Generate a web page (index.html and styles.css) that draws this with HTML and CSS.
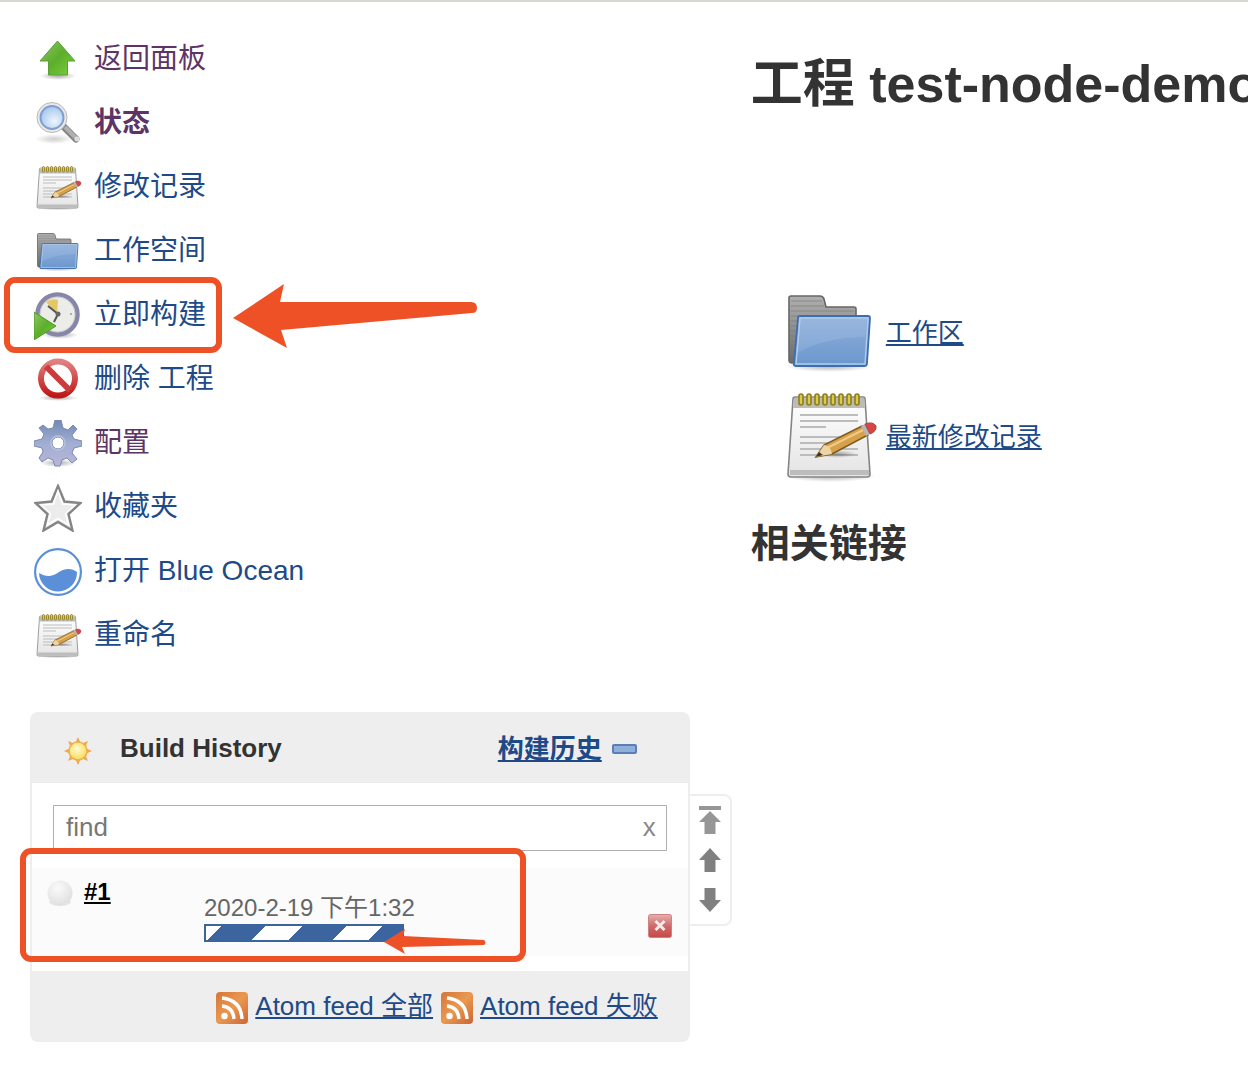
FILE: index.html
```html
<!DOCTYPE html>
<html lang="zh-CN">
<head>
<meta charset="utf-8">
<title>test-node-demo [Jenkins]</title>
<meta name="viewport" content="width=device-width, initial-scale=1">
<link rel="stylesheet" href="styles.css">
</head>
<body>
<svg class="defs" aria-hidden="true">
  <defs>
    <linearGradient id="g-green" x1="0" y1="0" x2="1" y2="1"><stop offset="0" stop-color="#8fc765"/><stop offset=".5" stop-color="#5cae2c"/><stop offset="1" stop-color="#7cd03a"/></linearGradient>
    <linearGradient id="g-grey" x1="0" y1="0" x2="0" y2="1"><stop offset="0" stop-color="#b0b0b0"/><stop offset="1" stop-color="#6b6b6b"/></linearGradient>
    <linearGradient id="g-blue" x1="0" y1="0" x2="0" y2="1"><stop offset="0" stop-color="#8fb0dc"/><stop offset="1" stop-color="#6c97cd"/></linearGradient>
    <linearGradient id="g-paper" x1="0" y1="0" x2="0" y2="1"><stop offset="0" stop-color="#ffffff"/><stop offset="1" stop-color="#e4e4e4"/></linearGradient>
    <linearGradient id="g-red" x1="0" y1="0" x2="0" y2="1"><stop offset="0" stop-color="#e08080"/><stop offset="1" stop-color="#c01818"/></linearGradient>
    <linearGradient id="g-gear" x1="0" y1="0" x2="0" y2="1"><stop offset="0" stop-color="#7088b4"/><stop offset=".5" stop-color="#a0aed2"/><stop offset="1" stop-color="#b9b6d8"/></linearGradient>
    <linearGradient id="g-feed" x1="0" y1="0" x2="1" y2="1"><stop offset="0" stop-color="#d6753c"/><stop offset=".5" stop-color="#e9994f"/><stop offset="1" stop-color="#cd6434"/></linearGradient>
    <linearGradient id="g-stop" x1="0" y1="0" x2="0" y2="1"><stop offset="0" stop-color="#e6b0b0"/><stop offset=".5" stop-color="#cf6a6a"/><stop offset="1" stop-color="#c64848"/></linearGradient>
    <radialGradient id="g-lens" cx=".6" cy=".65" r=".6"><stop offset="0" stop-color="#eef5fd"/><stop offset="1" stop-color="#abcaee"/></radialGradient>
    <radialGradient id="g-ball" cx=".4" cy=".3" r=".75"><stop offset="0" stop-color="#fafafa"/><stop offset="1" stop-color="#dedede"/></radialGradient>
    <radialGradient id="g-sun" cx=".45" cy=".4" r=".6"><stop offset="0" stop-color="#fffbd0"/><stop offset="1" stop-color="#f8dc5c"/></radialGradient>
    <radialGradient id="g-shadow"><stop offset="0" stop-color="#000" stop-opacity=".32"/><stop offset="1" stop-color="#000" stop-opacity="0"/></radialGradient>
  </defs>
  <symbol id="i-notepad" viewBox="0 0 96 96">
    <ellipse cx="48" cy="87" rx="46" ry="6" fill="url(#g-shadow)"/>
    <path d="M13 8H81Q83 8 83 10L88 85Q88 88 85 88H9Q6 88 6 85L11 10Q11 8 13 8Z" fill="url(#g-paper)" stroke="#858585" stroke-width="1.6"/>
    <path d="M12 9H82L83 19H11Z" fill="#bcbcb6"/>
    <path d="M8 81H87V86H8Z" fill="#bdbdbd"/>
    <path d="M18 26H76M18 32H76M18 38H44M18 48H60M18 54H50M18 60H76M18 66H76" stroke="#bcbcbc" stroke-width="2"/>
    <g fill="#dcc94c" stroke="#8f7d16" stroke-width="1.6"><rect x="17" y="5" width="4" height="11" rx="2"/><rect x="25" y="5" width="4" height="11" rx="2"/><rect x="33" y="5" width="4" height="11" rx="2"/><rect x="41" y="5" width="4" height="11" rx="2"/><rect x="49" y="5" width="4" height="11" rx="2"/><rect x="57" y="5" width="4" height="11" rx="2"/><rect x="65" y="5" width="4" height="11" rx="2"/><rect x="73" y="5" width="4" height="11" rx="2"/></g>
    <ellipse cx="55" cy="65" rx="20" ry="4" fill="url(#g-shadow)"/>
    <path d="M34 68L42 56L80 37L86 46L50 65Z" fill="#d7a04b" stroke="#7d5a1e" stroke-width="1.5"/>
    <path d="M45 59L81 41" stroke="#f0cb87" stroke-width="2"/>
    <path d="M34 68L42 56Q49 57 50 65Z" fill="#ecd4a4"/>
    <path d="M34 68L37 63L41 66Z" fill="#3d3320"/>
    <path d="M79 37L83 35L88 45L84 47Z" fill="#b9b4b4"/>
    <path d="M83 35Q91 32 94 37Q95 42 88 45Z" fill="#dc4444" stroke="#9a4a3c"/>
  </symbol>
  <symbol id="i-folder" viewBox="0 0 96 96">
    <ellipse cx="47" cy="81" rx="44" ry="6" fill="url(#g-shadow)"/>
    <path d="M9 11H38Q41 11 42 14L44 22H72Q74 22 74 24V78H10Q7 78 7 75V13Q7 11 9 11Z" fill="url(#g-grey)" stroke="#666" stroke-width="1.6"/>
    <path d="M9 16H40M9 21H42M9 26H72M9 31H16M9 36H16M9 41H15M9 46H15M9 51H14M9 56H14M9 61H13M9 66H13" stroke="#777" stroke-opacity=".6"/>
    <path d="M18 31H86Q88 31 88 33L85 78Q85 81 82 81H14Q11 81 12 78L16 33Q16 31 18 31Z" fill="url(#g-blue)" stroke="#3f6eaf" stroke-width="1.8"/>
    <path d="M18 33H86L83 79H14Z" fill="none" stroke="#b1cbec" stroke-width="1.4"/>
    <path d="M18 34H85L83 52Q44 52 15 68Z" fill="#fff" fill-opacity=".1"/>
  </symbol>
  <symbol id="i-feed" viewBox="0 0 32 32">
    <rect width="32" height="32" rx="4" fill="url(#g-feed)"/>
    <circle cx="8.500" cy="24" r="3.200" fill="#fff"/>
    <path d="M6 14Q17 15 18 27M6 6Q25 8 26 27" fill="none" stroke="#fff" stroke-width="3.400"/>
  </symbol>
</svg>

<div class="page">
  <aside class="side">
    <nav aria-label="工程">
      <ul class="tasks">
        <li class="task"><a class="task-link visited" href="#">
          <svg class="icon" viewBox="0 0 48 48" aria-hidden="true"><ellipse cx="24" cy="40" rx="18" ry="4" fill="url(#g-shadow)"/><path d="M23.500 5L41 25H33.500V39H14.500V25H6Z" fill="url(#g-green)" stroke="#5a9c3b"/></svg>
          <span>返回面板</span></a></li>
        <li class="task"><a class="task-link visited current" href="#">
          <svg class="icon" viewBox="0 0 48 48" aria-hidden="true"><ellipse cx="20" cy="39" rx="19" ry="5" fill="url(#g-shadow)" opacity=".6"/><path d="M30 27L42 39" stroke="#858585" stroke-width="7" stroke-linecap="round"/><path d="M31 27L42 38" stroke="#b0b0b0" stroke-width="4"/><circle cx="43" cy="39" r="2.500" fill="#ddd"/><circle cx="18" cy="17.500" r="15" fill="#e9e9e9" stroke="#b8b8b8"/><circle cx="18" cy="17.500" r="11.500" fill="url(#g-lens)" stroke="#7f9fce" stroke-width="2"/></svg>
          <span>状态</span></a></li>
        <li class="task"><a class="task-link" href="#"><svg class="icon" aria-hidden="true"><use href="#i-notepad"/></svg><span>修改记录</span></a></li>
        <li class="task"><a class="task-link" href="#"><svg class="icon" aria-hidden="true"><use href="#i-folder"/></svg><span>工作空间</span></a></li>
        <li class="task"><a class="task-link" href="#">
          <svg class="icon" viewBox="0 0 48 48" aria-hidden="true"><ellipse cx="26" cy="43" rx="18" ry="4" fill="url(#g-shadow)"/><circle cx="23.500" cy="22.500" r="20" fill="#ecece8" stroke="#8586a8" stroke-width="4.500"/><circle cx="23.500" cy="22.500" r="17.500" fill="none" stroke="#c6c6cc"/><path d="M23 22L12 10Q18 6 24 8Z" fill="#e4c865"/><path d="M14 14L24 22L20 30" fill="none" stroke="#555" stroke-width="2"/><circle cx="24" cy="22" r="2.500" fill="#666"/><circle cx="37" cy="22" r="1" fill="#999"/><path d="M0 20L22 34L0 48Z" fill="url(#g-green)" stroke="#4f9c25"/></svg>
          <span>立即构建</span></a>
          <span class="mark mark-task"></span>
          <svg class="mark-arrow-task" viewBox="0 0 246 66" aria-hidden="true"><path d="M0 35L51 1L47 19H238Q244 19 244 25Q244 30 239 30L48 47L54 65Z" fill="#ee5126"/></svg>
        </li>
        <li class="task"><a class="task-link" href="#">
          <svg class="icon" viewBox="0 0 48 48" aria-hidden="true"><ellipse cx="24" cy="42" rx="20" ry="3" fill="url(#g-shadow)"/><circle cx="24" cy="22.500" r="17" fill="#fff" stroke="url(#g-red)" stroke-width="6"/><path d="M12 10.500L36 34.500" stroke="#cc3c3c" stroke-width="6"/></svg>
          <span>删除 工程</span></a></li>
        <li class="task"><a class="task-link visited" href="#">
          <svg class="icon" viewBox="0 0 48 48" aria-hidden="true"><ellipse cx="24" cy="43" rx="18" ry="4" fill="url(#g-shadow)"/><path fill-rule="evenodd" d="M21 0H27L29 8L34 10L39 5L43 9L38 15L40 19L48 21V26L40 28L38 33L43 39L38 43L33 38L28 40L26 46H21L19 40L14 38L8 42L5 38L9 32L8 28L0 26V21L8 19L10 14L5 8L9 5L14 9L19 8ZM24 17A6 6 0 1 0 24 29A6 6 0 1 0 24 17Z" fill="url(#g-gear)" stroke="#7d89b0"/><circle cx="24" cy="23" r="7" fill="none" stroke="#b8c1dc" stroke-width="1.500"/></svg>
          <span>配置</span></a></li>
        <li class="task"><a class="task-link" href="#">
          <svg class="icon" viewBox="0 0 48 48" aria-hidden="true"><path d="M24 2L30.500 17.500L46.500 19L34.500 30L38.500 46.500L24 38L9.500 46.500L13.500 30L1.500 19L17.500 17.500Z" fill="#ececec" stroke="#858585" stroke-width="2.400"/><path d="M24 7L28.500 20L41 21L31.500 29.500L34.500 41L24 34.500L13.500 41L16.500 29.500L7 21L19.500 20Z" fill="none" stroke="#fff" stroke-width="1.500"/></svg>
          <span>收藏夹</span></a></li>
        <li class="task"><a class="task-link" href="#">
          <svg class="icon" viewBox="0 0 48 48" aria-hidden="true"><circle cx="24" cy="24" r="22.900" fill="#fff" stroke="#5b8fd8" stroke-width="2.200"/><path d="M5 25C12 29 18 29 25 24C31 20 38 20 43 24A19 19 0 0 1 5 25Z" fill="#5b8fd8"/></svg>
          <span>打开 Blue Ocean</span></a></li>
        <li class="task"><a class="task-link" href="#"><svg class="icon" aria-hidden="true"><use href="#i-notepad"/></svg><span>重命名</span></a></li>
      </ul>
    </nav>

    <section class="history">
      <header class="history-head">
        <svg class="sun" viewBox="0 0 32 32" aria-hidden="true"><path d="M16 2L18.500 7.500H13.500ZM16 30L18.500 24.500H13.500ZM2 16L7.500 13.500V18.500ZM30 16L24.500 13.500V18.500ZM6 6L12 8.500L8.500 12ZM26 6L20 8.500L23.500 12ZM6 26L12 23.500L8.500 20ZM26 26L20 23.500L23.500 20Z" fill="#eda94e"/><circle cx="16" cy="16" r="9" fill="url(#g-sun)" stroke="#efb04e" stroke-width="1.500"/></svg>
        <h2 class="history-title">Build History</h2>
        <a class="trend" href="#">构建历史</a>
        <button class="plain" type="button" aria-label="collapse"><svg class="minus" viewBox="0 0 26 12" aria-hidden="true"><rect x="1" y="2" width="23" height="8" rx="1" fill="#8fb0da" stroke="#5b7fb5" stroke-width="2"/></svg></button>
      </header>
      <div class="search">
        <input class="search-input" type="text" placeholder="find" aria-label="find">
        <button class="plain search-clear" type="button">x</button>
      </div>
      <div class="build">
        <svg class="ball" viewBox="0 0 28 28" aria-hidden="true"><ellipse cx="14" cy="22" rx="11" ry="4" fill="#e6e6e6"/><circle cx="14" cy="13" r="12.500" fill="url(#g-ball)"/></svg>
        <a class="build-number" href="#">#1</a>
        <div class="build-detail">
          <span class="build-date">2020-2-19 下午1:32</span>
          <div class="progress" role="progressbar" aria-label="#1"></div>
        </div>
        <button class="plain stop" type="button" aria-label="cancel"><svg class="stop-icon" viewBox="0 0 24 24" aria-hidden="true"><rect x=".5" y=".5" width="23" height="23" rx="2" fill="url(#g-stop)" stroke="#cf8080"/><path d="M7.500 7L16.500 16M16.500 7L7.500 16" stroke="#f8eaea" stroke-width="3"/></svg></button>
        <span class="mark mark-build"></span>
        <svg class="mark-arrow-build" viewBox="0 0 104 28" aria-hidden="true"><path d="M0 14L21 1L19 8L100 12Q103 15 100 17L18 19L21 26Z" fill="#ee5126"/></svg>
      </div>
      <footer class="feeds">
        <a class="feed" href="#"><svg class="feed-icon" aria-hidden="true"><use href="#i-feed"/></svg><span class="feed-text">Atom feed 全部</span></a>
        <a class="feed" href="#"><svg class="feed-icon" aria-hidden="true"><use href="#i-feed"/></svg><span class="feed-text">Atom feed 失败</span></a>
      </footer>
      <div class="pager">
        <button class="plain" type="button" aria-label="top"><svg class="pager-icon" viewBox="0 0 24 30" aria-hidden="true"><path d="M1 1H23V5H1ZM12 6L23 17H17.500V29H6.500V17H1Z" fill="#969696"/></svg></button>
        <button class="plain" type="button" aria-label="up"><svg class="pager-icon" viewBox="0 0 24 30" aria-hidden="true"><path d="M12 3L23 15H17.500V27H6.500V15H1Z" fill="#808080"/></svg></button>
        <button class="plain" type="button" aria-label="down"><svg class="pager-icon" viewBox="0 0 24 30" aria-hidden="true"><path d="M12 27L23 15H17.500V3H6.500V15H1Z" fill="#808080"/></svg></button>
      </div>
    </section>
  </aside>

  <main class="main">
    <h1 class="title">工程 test-node-demo</h1>
    <div class="links">
      <a class="big-link" href="#"><svg class="big-icon" aria-hidden="true"><use href="#i-folder"/></svg><span class="big-text">工作区</span></a>
      <a class="big-link" href="#"><svg class="big-icon" aria-hidden="true"><use href="#i-notepad"/></svg><span class="big-text">最新修改记录</span></a>
    </div>
    <h2 class="subtitle">相关链接</h2>
  </main>
</div>
</body>
</html>
```
FILE: styles.css
```css
* { box-sizing: border-box; }

body {
  margin: 0;
  border-top: 2px solid #d8d8d2;
  background: #fff;
  color: #333;
  font: 26px/32px "Liberation Sans", "Noto Sans CJK SC", sans-serif;
  overflow-x: hidden;
}

a { color: #204a87; }
svg { display: block; flex: none; }
h1, h2 { margin: 0; }
.defs { position: absolute; width: 0; height: 0; }

.plain {
  padding: 0;
  border: 0;
  background: none;
  color: inherit;
  font: inherit;
  cursor: pointer;
}

.page {
  display: grid;
  grid-template-columns: minmax(0, 3fr) minmax(0, 2fr);
}

/* Sidebar tasks */
.side { padding: 26px 59px 40px 30px; }

.tasks {
  margin: 0 0 44px;
  padding: 0 4px;
  list-style: none;
}

.task { position: relative; }

.task-link {
  display: flex;
  align-items: center;
  gap: 12px;
  height: 64px;
  font-size: 28px;
  text-decoration: none;
}

.task-link span { padding-bottom: 3px; }
.visited { color: #5c3566; }
.current { font-weight: bold; }
.icon { width: 48px; height: 48px; }

/* Hand-drawn style highlights */
.mark {
  position: absolute;
  border: 6px solid #ee5126;
  border-radius: 11px;
  pointer-events: none;
}

.mark-task { left: -30px; top: -7px; width: 218px; height: 76px; }
.mark-arrow-task { position: absolute; left: 199px; top: -1px; width: 246px; height: 66px; }
.mark-build { left: -12px; top: -20px; width: 506px; height: 114px; }
.mark-arrow-build { position: absolute; left: 352px; top: 60px; width: 104px; height: 28px; }

/* Build history */
.history {
  position: relative;
  border: 2px solid #eee;
  border-radius: 8px;
}

.history-head {
  display: flex;
  align-items: center;
  height: 69px;
  padding: 0 50px 0 30px;
  background: #eee;
}

.sun { width: 32px; height: 32px; margin-top: 4px; }

.history-title {
  flex: 1;
  margin-left: 26px;
  padding-bottom: 2px;
  font-size: 26px;
}

.trend { margin-right: 10px; font-weight: bold; }
.minus { width: 26px; height: 12px; }

.search {
  position: relative;
  margin: 22px 21px 17px;
}

.search-input {
  display: block;
  width: 100%;
  height: 46px;
  padding: 0 40px 2px 12px;
  border: 1px solid #b0b0b0;
  color: #333;
  font: inherit;
}

.search-input::placeholder { color: #777; opacity: 1; }

.search-clear {
  position: absolute;
  right: 11px;
  top: 6px;
  color: #888;
}

.build {
  position: relative;
  display: flex;
  align-items: flex-start;
  height: 88px;
  margin-bottom: 15px;
  padding: 8px 16px 0 14px;
  background: #fbfbfb;
  font-size: 24px;
}

.ball { width: 28px; height: 28px; margin-top: 4px; }

.build-number {
  width: 120px;
  margin-left: 10px;
  color: #000;
  font-weight: bold;
}

.build-detail { flex: 1; padding-top: 16px; }
.build-date { display: block; color: #666; }

.progress {
  width: 200px;
  height: 18px;
  border: 2px solid #3c65a0;
  background: repeating-linear-gradient(135deg, #fff 0 11px, #3c65a0 11px 42px, #fff 42px 57px);
}

.stop { margin-top: 38px; }
.stop-icon { width: 24px; height: 24px; }

.feeds {
  display: flex;
  justify-content: flex-end;
  align-items: center;
  gap: 8px;
  height: 69px;
  padding-right: 30px;
  background: #eee;
}

.feed {
  display: flex;
  align-items: center;
  gap: 7px;
  text-decoration: none;
}

.feed-icon { width: 32px; height: 32px; margin-top: 4px; }
.feed-text { text-decoration: underline; }

/* Pager tab that hangs off the panel's right edge */
.pager {
  position: absolute;
  left: 100%;
  top: 80px;
  display: flex;
  flex-direction: column;
  align-items: center;
  gap: 10px;
  width: 44px;
  padding: 9px 0;
  border: 2px solid #eee;
  border-radius: 0 8px 8px 0;
}

.pager-icon { width: 24px; height: 30px; }

/* Main panel */
.main {
  min-width: 0;
  padding: 50px 0 0 2px;
}

.title {
  font-size: 52px;
  line-height: 64px;
  white-space: nowrap;
}

.links {
  display: flex;
  flex-direction: column;
  align-items: flex-start;
  gap: 8px;
  margin: 169px 0 33px 31px;
}

.big-link {
  display: flex;
  align-items: center;
  gap: 8px;
  text-decoration: none;
}

.big-icon { width: 96px; height: 96px; }
.big-text { text-decoration: underline; }

.subtitle {
  font-size: 39px;
  line-height: 52px;
}
```
